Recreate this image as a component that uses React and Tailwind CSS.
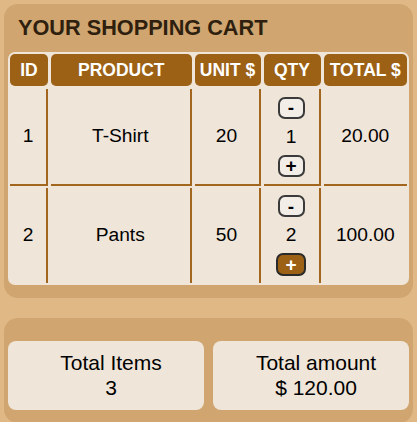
import React from "react";

const items = [
  { id: 1, name: "T-Shirt", unit: 20, qty: 1, total: "20.00" },
  { id: 2, name: "Pants", unit: 50, qty: 2, total: "100.00" },
];

const cols = "grid grid-cols-[38px_140.5px_66px_57px_1fr] gap-x-[3px]";

function QtyButton({ children, active }) {
  return (
    <button
      className={
        active
          ? "flex h-[23px] w-[30px] items-center justify-center rounded-[7px] border-2 border-[#2a2a2a] bg-[#9c6115] text-[19px] font-bold leading-none text-white"
          : "flex h-[22px] w-[27px] items-center justify-center rounded-[7px] border-2 border-[#3a3a3a] bg-[#f2ede6] text-[19px] font-bold leading-none text-black"
      }
    >
      {children}
    </button>
  );
}

export default function App() {
  return (
    <div className="min-h-screen bg-[#dfb886] p-[4px] font-['Liberation_Sans',Arial,sans-serif] text-black">
      <div className="rounded-[14px] bg-[#d0a56f] px-[4px] pb-[13px]">
        <h2 className="pl-[10px] text-[21.7px] font-bold leading-[48px] text-[#2e1f0e]">
          YOUR SHOPPING CART
        </h2>
        <div className="rounded-[7px] bg-[#efe5d8] px-[2px] pt-[2px] pb-[2px]">
          <div className={cols}>
            {["ID", "PRODUCT", "UNIT $", "QTY", "TOTAL $"].map((h) => (
              <div
                key={h}
                className="flex h-[32px] items-center justify-center rounded-[5px] bg-[#9c6115] text-[17.5px] font-bold text-white"
              >
                {h}
              </div>
            ))}
          </div>
          {items.map((it, i) => {
            const first = i === 0;
            const rowCls = first
              ? "mt-[3px] h-[97px] border-b-2"
              : "mt-[2px] h-[95px]";
            const cell = `flex items-center justify-center border-[#a2661f] text-[19.2px] ${rowCls}`;
            return (
              <div key={it.id} className={cols}>
                <div className={`${cell} border-r-2`}>{it.id}</div>
                <div className={`${cell} border-r-2`}>{it.name}</div>
                <div className={`${cell} border-r-2`}>{it.unit}</div>
                <div className={`${cell} flex-col border-r-2`}>
                  <QtyButton>-</QtyButton>
                  <span className="leading-[36px]">{it.qty}</span>
                  <QtyButton active={!first}>+</QtyButton>
                </div>
                <div className={cell}>{it.total}</div>
              </div>
            );
          })}
        </div>
      </div>
      <div className="mt-[20px] rounded-[14px] bg-[#d0a56f] px-[4px] pt-[23px] pb-[13px]">
        <div className="grid grid-cols-2 gap-x-[9px]">
          <div className="rounded-[8px] bg-[#efe5d8] pt-[9px] pb-[10px] pl-[10px] text-center text-[21px] leading-[25px]">
            <div>Total Items</div>
            <div>3</div>
          </div>
          <div className="rounded-[8px] bg-[#efe5d8] pt-[9px] pb-[10px] pl-[10px] text-center text-[21px] leading-[25px]">
            <div>Total amount</div>
            <div>$ 120.00</div>
          </div>
        </div>
      </div>
    </div>
  );
}
